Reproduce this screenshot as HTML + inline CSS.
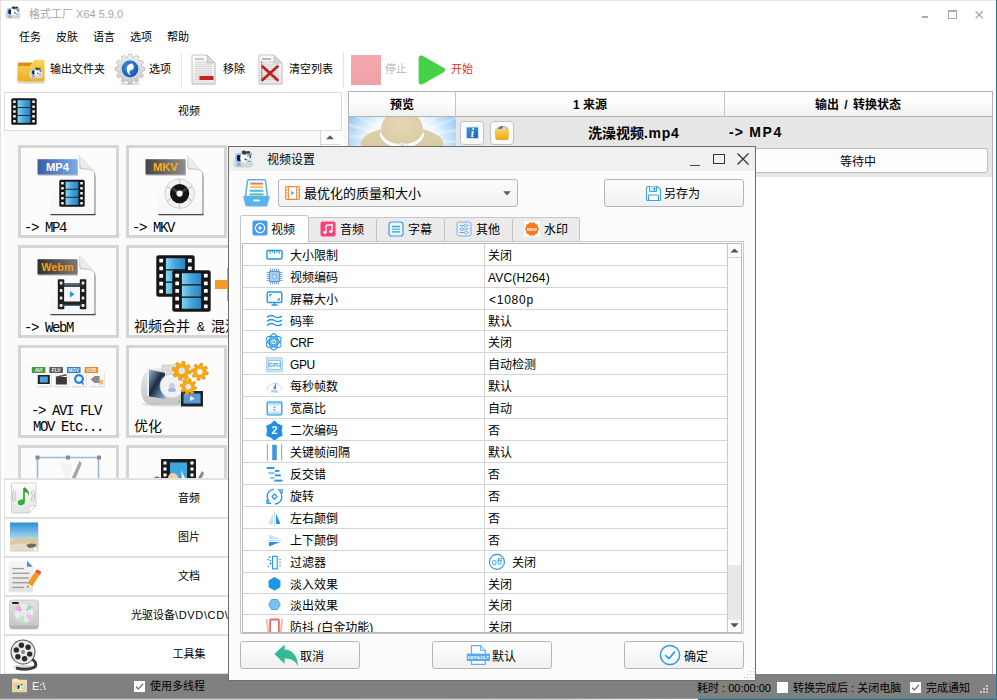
<!DOCTYPE html>
<html lang="zh-CN">
<head>
<meta charset="utf-8">
<title>格式工厂 X64 5.9.0</title>
<style>
html,body{margin:0;padding:0}
body{width:997px;height:700px;overflow:hidden;background:#fff;font-family:"Liberation Sans","Noto Sans CJK SC",sans-serif;position:relative}
div,svg{position:absolute}
svg{overflow:visible}
#win{left:0;top:0;width:997px;height:700px;overflow:hidden}
#dlg{left:228px;top:146px;width:526px;height:533px;border:1px solid #6d6d6d;background:#fcfcfc;overflow:hidden}
#grid{left:14px;top:97px;width:484px;height:388px;overflow:hidden;background:#fff}
.t{white-space:nowrap}
.c{text-align:center}
.tile{width:101px;height:93px;box-sizing:border-box;border:3px solid #d5d5d5;background:#fcfcfc;overflow:hidden}
.tl{font-family:"Liberation Mono","Noto Serif CJK SC",monospace;font-size:14px;line-height:16px;white-space:pre;color:#000;letter-spacing:-1.4px}
.tc{font-family:"Liberation Sans","Noto Sans CJK SC",sans-serif;font-weight:400;font-size:14px;line-height:20px;white-space:pre;color:#000}
.amp{font-family:"Liberation Mono",monospace;font-size:13px;letter-spacing:-0.8px}
</style>
</head>
<body>
<div id="win">
<svg style="left:4px;top:5px;" width="17" height="15" viewBox="0 0 23 20"><defs><linearGradient id="g1" x1="0" y1="0" x2="0" y2="1"><stop offset="0" stop-color="#f6f6f6"/><stop offset="1" stop-color="#d0d0d0"/></linearGradient></defs><path d="M2 11Q2 5 6 3.6L15 2.4Q20.5 3 21.6 8L22.4 14Q22.6 18 18.5 18.6H6Q2.4 18.4 2 14.5Z" fill="url(#g1)"/><path d="M4.6 4.4L10.4 3.4L10 14.2L4.4 13.2Q3.6 9 4.6 4.4Z" fill="#9cc6ee"/><path d="M6.2 6.2Q9 5.4 10 7.2V11.6Q8.6 12.6 6.4 11.8Q5.2 9 6.2 6.2Z" fill="#0c1a4c"/><path d="M6.6 13L8.8 13.4V16.2L6.4 15.6Z" fill="#7fb0e6"/><circle cx="13.2" cy="9.2" r="4" fill="#ffffff"/><path d="M10.8 2.2Q13 0.8 15.2 2.4Q17.4 1.2 19.4 2.8Q19.8 4.4 18.2 4.8Q15.6 4 14.6 5.6Q12.4 5.8 10.8 4.4Z" fill="#3c3c3c"/><path d="M15.8 5.6L21 4.2L21.4 12.4L16.2 13.2Z" fill="#e8f0fa"/><path d="M16 5.5L21 4.2L21.1 6L16.1 7.2Z" fill="#6a9ad6"/><path d="M18.6 6.6H20V9H18.6Z" fill="#3a3a3a"/><path d="M13.6 9.2L16.4 10.4L15.4 11.8L13.2 10.6Z" fill="#555"/><path d="M16.4 12L20 11.4V12.6L16.4 13.2Z" fill="#5a90d4"/><rect x="5.6" y="15.2" width="4.6" height="1.5" fill="#9a9a9a"/><circle cx="19.4" cy="15.2" r="0.7" fill="#7ae060"/></svg>
<div class="t" style="left:29px;top:6px;font-size:11px;line-height:16px;color:#a6a6a6;">格式工厂 X64 5.9.0</div>
<div style="left:922px;top:16px;width:6px;height:2px;background:#ababab"></div>
<div style="left:948px;top:10px;width:9px;height:9px;border:1px solid #ababab;border-top-width:2px;box-sizing:border-box"></div>
<svg style="left:975px;top:10px;" width="9" height="9" viewBox="0 0 9 9"><path d="M0.6 1.2L7.8 8.4M7.8 1.2L0.6 8.4" stroke="#a4a4a4" stroke-width="1.25" fill="none"/></svg>
<div class="t" style="left:19px;top:29px;font-size:11px;line-height:16px;color:#000;">任务</div>
<div class="t" style="left:56px;top:29px;font-size:11px;line-height:16px;color:#000;">皮肤</div>
<div class="t" style="left:93px;top:29px;font-size:11px;line-height:16px;color:#000;">语言</div>
<div class="t" style="left:130px;top:29px;font-size:11px;line-height:16px;color:#000;">选项</div>
<div class="t" style="left:167px;top:29px;font-size:11px;line-height:16px;color:#000;">帮助</div>
<svg style="left:16px;top:58px;" width="30" height="26" viewBox="0 0 30 26"><defs><linearGradient id="g2" x1="0" y1="0" x2="0" y2="1"><stop offset="0" stop-color="#f9d35c"/><stop offset="1" stop-color="#ecae22"/></linearGradient></defs><ellipse cx="15" cy="24.4" rx="14.5" ry="1.4" fill="#000" opacity="0.16"/><path d="M1.8 6Q1.8 4.4 3.4 4.4H16V11H1.8Z" fill="#dc8a1a"/><path d="M1.4 9.4Q1.4 8 3 8H12.6Q13.6 8 14.4 7L17.6 3Q18.4 2 19.6 2H27Q28.6 2 28.6 3.6V22Q28.6 23.6 27 23.6H3Q1.4 23.6 1.4 22Z" fill="url(#g2)"/><g transform="translate(12.4,8.6) scale(0.64)"><defs><linearGradient id="g3" x1="0" y1="0" x2="0" y2="1"><stop offset="0" stop-color="#f6f6f6"/><stop offset="1" stop-color="#d0d0d0"/></linearGradient></defs><path d="M2 11Q2 5 6 3.6L15 2.4Q20.5 3 21.6 8L22.4 14Q22.6 18 18.5 18.6H6Q2.4 18.4 2 14.5Z" fill="url(#g3)"/><path d="M4.6 4.4L10.4 3.4L10 14.2L4.4 13.2Q3.6 9 4.6 4.4Z" fill="#9cc6ee"/><path d="M6.2 6.2Q9 5.4 10 7.2V11.6Q8.6 12.6 6.4 11.8Q5.2 9 6.2 6.2Z" fill="#0c1a4c"/><path d="M6.6 13L8.8 13.4V16.2L6.4 15.6Z" fill="#7fb0e6"/><circle cx="13.2" cy="9.2" r="4" fill="#ffffff"/><path d="M10.8 2.2Q13 0.8 15.2 2.4Q17.4 1.2 19.4 2.8Q19.8 4.4 18.2 4.8Q15.6 4 14.6 5.6Q12.4 5.8 10.8 4.4Z" fill="#3c3c3c"/><path d="M15.8 5.6L21 4.2L21.4 12.4L16.2 13.2Z" fill="#e8f0fa"/><path d="M16 5.5L21 4.2L21.1 6L16.1 7.2Z" fill="#6a9ad6"/><path d="M18.6 6.6H20V9H18.6Z" fill="#3a3a3a"/><path d="M13.6 9.2L16.4 10.4L15.4 11.8L13.2 10.6Z" fill="#555"/><path d="M16.4 12L20 11.4V12.6L16.4 13.2Z" fill="#5a90d4"/><rect x="5.6" y="15.2" width="4.6" height="1.5" fill="#9a9a9a"/><circle cx="19.4" cy="15.2" r="0.7" fill="#7ae060"/></g></svg>
<div class="t" style="left:50px;top:60.5px;font-size:11px;line-height:16px;color:#000;">输出文件夹</div>
<svg style="left:114px;top:53px;" width="32" height="32" viewBox="0 0 32 32"><defs><linearGradient id="g4" x1="0" y1="0" x2="0" y2="1"><stop offset="0" stop-color="#f4f4f4"/><stop offset="1" stop-color="#c9c9c9"/></linearGradient><radialGradient id="g5" cx="0.4" cy="0.35" r="0.75"><stop offset="0" stop-color="#3f8fe0"/><stop offset="1" stop-color="#0d4ea6"/></radialGradient></defs><ellipse cx="16" cy="31" rx="11" ry="1" fill="#000" opacity="0.15"/><polygon points="28.14,14.04 30.71,14.38 30.71,17.62 28.14,17.96 27.50,20.37 29.55,21.95 27.93,24.76 25.54,23.77 23.77,25.54 24.76,27.93 21.95,29.55 20.37,27.50 17.96,28.14 17.62,30.71 14.38,30.71 14.04,28.14 11.63,27.50 10.05,29.55 7.24,27.93 8.23,25.54 6.46,23.77 4.07,24.76 2.45,21.95 4.50,20.37 3.86,17.96 1.29,17.62 1.29,14.38 3.86,14.04 4.50,11.63 2.45,10.05 4.07,7.24 6.46,8.23 8.23,6.46 7.24,4.07 10.05,2.45 11.63,4.50 14.04,3.86 14.38,1.29 17.62,1.29 17.96,3.86 20.37,4.50 21.95,2.45 24.76,4.07 23.77,6.46 25.54,8.23 27.93,7.24 29.55,10.05 27.50,11.63" fill="url(#g4)" stroke="#b3b3b3" stroke-width="0.8" stroke-linejoin="round"/><circle cx="16" cy="16" r="9.6" fill="#ececec" stroke="#c4c4c4" stroke-width="0.6"/><circle cx="16" cy="16" r="8.4" fill="url(#g5)"/><path d="M18.5 10.5C14 10.5 11 14.5 13.5 19.5C14.5 21.5 16 22.5 17 22.5C15 20.5 14.8 17.5 17.5 17C20.5 16.5 20 12.5 18.5 10.5Z" fill="#fff"/></svg>
<div class="t" style="left:149px;top:60.5px;font-size:11px;line-height:16px;color:#000;">选项</div>
<div style="left:181px;top:52px;width:1px;height:36px;background:#e2e2e2"></div>
<svg style="left:190px;top:53px;" width="27" height="33" viewBox="0 0 27 33"><defs><linearGradient id="g6" x1="0" y1="0" x2="0" y2="1"><stop offset="0" stop-color="#fdfdfd"/><stop offset="1" stop-color="#e6e6e6"/></linearGradient></defs><path d="M2 2H17L25 10V31H2Z" fill="#000" opacity="0.12" transform="translate(0.6,0.8)"/><path d="M2 2H17L25 10V31H2Z" fill="url(#g6)" stroke="#b9b9b9" stroke-width="0.8"/><path d="M17 2V10H25Z" fill="#d9d9d9" stroke="#b0b0b0" stroke-width="0.6"/><path d="M5 6H14" stroke="#6aa0d8" stroke-width="1"/><path d="M5 9.0H17" stroke="#c9c9c9" stroke-width="0.8"/><path d="M5 11.2H22" stroke="#c9c9c9" stroke-width="0.8"/><path d="M5 13.4H22" stroke="#c9c9c9" stroke-width="0.8"/><path d="M5 15.6H22" stroke="#c9c9c9" stroke-width="0.8"/><path d="M5 17.8H22" stroke="#c9c9c9" stroke-width="0.8"/><path d="M5 20.0H22" stroke="#c9c9c9" stroke-width="0.8"/><path d="M5 22.2H22" stroke="#c9c9c9" stroke-width="0.8"/><path d="M5 24.4H22" stroke="#c9c9c9" stroke-width="0.8"/><path d="M5 26.6H22" stroke="#c9c9c9" stroke-width="0.8"/><rect x="9.5" y="23" width="14" height="4" fill="#c9201d"/></svg>
<div class="t" style="left:223px;top:60.5px;font-size:11px;line-height:16px;color:#000;">移除</div>
<svg style="left:257px;top:53px;" width="27" height="33" viewBox="0 0 27 33"><defs><linearGradient id="g7" x1="0" y1="0" x2="0" y2="1"><stop offset="0" stop-color="#fdfdfd"/><stop offset="1" stop-color="#e6e6e6"/></linearGradient></defs><path d="M2 2H17L25 10V31H2Z" fill="#000" opacity="0.12" transform="translate(0.6,0.8)"/><path d="M2 2H17L25 10V31H2Z" fill="url(#g7)" stroke="#b9b9b9" stroke-width="0.8"/><path d="M17 2V10H25Z" fill="#d9d9d9" stroke="#b0b0b0" stroke-width="0.6"/><path d="M5 6H14" stroke="#777" stroke-width="1"/><path d="M5 9.0H17" stroke="#c4c4c4" stroke-width="0.8"/><rect x="4" y="8.4" width="1.2" height="1.2" fill="#555"/><path d="M5 11.2H22" stroke="#c4c4c4" stroke-width="0.8"/><rect x="4" y="10.6" width="1.2" height="1.2" fill="#555"/><path d="M5 13.4H22" stroke="#c4c4c4" stroke-width="0.8"/><rect x="4" y="12.8" width="1.2" height="1.2" fill="#555"/><path d="M5 15.6H22" stroke="#c4c4c4" stroke-width="0.8"/><rect x="4" y="15.0" width="1.2" height="1.2" fill="#555"/><path d="M5 17.8H22" stroke="#c4c4c4" stroke-width="0.8"/><rect x="4" y="17.2" width="1.2" height="1.2" fill="#555"/><path d="M5 20.0H22" stroke="#c4c4c4" stroke-width="0.8"/><rect x="4" y="19.4" width="1.2" height="1.2" fill="#555"/><path d="M5 22.2H22" stroke="#c4c4c4" stroke-width="0.8"/><rect x="4" y="21.6" width="1.2" height="1.2" fill="#555"/><path d="M5 24.4H22" stroke="#c4c4c4" stroke-width="0.8"/><rect x="4" y="23.8" width="1.2" height="1.2" fill="#555"/><path d="M5 26.6H22" stroke="#c4c4c4" stroke-width="0.8"/><rect x="4" y="26.0" width="1.2" height="1.2" fill="#555"/><path d="M5.5 13.5L20.5 27M20.5 13.5L5.5 27" stroke="#c2201f" stroke-width="2.8" stroke-linecap="round"/></svg>
<div class="t" style="left:289px;top:60.5px;font-size:11px;line-height:16px;color:#000;">清空列表</div>
<div style="left:343px;top:52px;width:1px;height:36px;background:#e2e2e2"></div>
<div style="left:351px;top:55px;width:30px;height:30px;background:linear-gradient(#f4a9af,#efa0a6)"></div>
<div class="t" style="left:385px;top:60.5px;font-size:11px;line-height:16px;color:#b9b9b9;">停止</div>
<svg style="left:417px;top:53px;" width="30" height="34" viewBox="0 0 30 34"><path d="M4.3 5.2L25.3 17L4.3 28.8Z" fill="#45d145" stroke="#45d145" stroke-width="5.4" stroke-linejoin="round"/></svg>
<div class="t" style="left:451px;top:60.5px;font-size:11px;line-height:16px;color:#e0301e;">开始</div>
<div style="left:4px;top:131px;width:317px;height:347px;background:#fafafa"></div>
<div style="left:4px;top:92px;width:338px;height:39px;background:#fff;border:1px solid #dcdcdc;box-sizing:border-box"></div>
<svg style="left:11px;top:98px;" width="26" height="27" viewBox="0 0 26 27"><defs><linearGradient id="g8" x1="0" y1="0" x2="1" y2="0"><stop offset="0" stop-color="#86d4f4"/><stop offset="0.5" stop-color="#44a4da"/><stop offset="1" stop-color="#2a84c4"/></linearGradient></defs><rect x="0.3" y="0.3" width="25.4" height="26.4" rx="1.50" fill="#161616"/><rect x="6.60" y="2.15" width="12.80" height="6.97" fill="url(#g8)"/><rect x="6.60" y="10.02" width="12.80" height="6.97" fill="url(#g8)"/><rect x="6.60" y="17.88" width="12.80" height="6.97" fill="url(#g8)"/><rect x="2.20" y="2.50" width="2.50" height="2.50" rx="0.40" fill="#fff"/><rect x="21.30" y="2.50" width="2.50" height="2.50" rx="0.40" fill="#fff"/><rect x="2.20" y="7.38" width="2.50" height="2.50" rx="0.40" fill="#fff"/><rect x="21.30" y="7.38" width="2.50" height="2.50" rx="0.40" fill="#fff"/><rect x="2.20" y="12.25" width="2.50" height="2.50" rx="0.40" fill="#fff"/><rect x="21.30" y="12.25" width="2.50" height="2.50" rx="0.40" fill="#fff"/><rect x="2.20" y="17.12" width="2.50" height="2.50" rx="0.40" fill="#fff"/><rect x="21.30" y="17.12" width="2.50" height="2.50" rx="0.40" fill="#fff"/><rect x="2.20" y="22.00" width="2.50" height="2.50" rx="0.40" fill="#fff"/><rect x="21.30" y="22.00" width="2.50" height="2.50" rx="0.40" fill="#fff"/></svg>
<div class="t c" style="left:89px;top:103px;width:200px;font-size:11px;line-height:16px;color:#000;">视频</div>
<div style="left:320px;top:131px;width:22px;height:347px;background:#fff;border-left:1px solid #d4d4d4;box-sizing:border-box"></div>
<div style="left:321px;top:144px;width:20px;height:1px;background:#d9d9d9"></div>
<svg style="left:326px;top:135px;" width="8" height="4" viewBox="0 0 8 4"><path d="M0 4.2L4 0.2L8 4.2Z" fill="#5c5c5c"/></svg>
<div class="tile" style="left:18px;top:145px;width:101px">
<svg style="left:14px;top:4px" width="66" height="66" viewBox="0 0 66 66"><defs><linearGradient id="g9" x1="0" y1="0" x2="1" y2="0"><stop offset="0" stop-color="#3c5ca6"/><stop offset="1" stop-color="#7aaae6"/></linearGradient><linearGradient id="g10" x1="0" y1="0" x2="0" y2="1"><stop offset="0" stop-color="#ffffff"/><stop offset="1" stop-color="#f6f6f6"/></linearGradient></defs><path d="M14.5 2.5H42Q44 2.5 45.5 4L57.5 17.5Q59.5 20 59.5 23V62H14.5Z" fill="#000" opacity="0.16" transform="translate(1.4,2)"/><path d="M14.5 2.5H42Q44 2.5 45.5 4L57.5 17.5Q59.5 20 59.5 23V62H14.5Z" fill="#000" opacity="0.45" transform="translate(0.8,1.1)"/><rect x="15.5" y="61" width="44.8" height="2.1" fill="#000" opacity="0.4"/><path d="M14.5 2.5H42Q44 2.5 45.5 4L57.5 17.5Q59.5 20 59.5 23V62H14.5Z" fill="url(#g10)"/><path d="M43.5 3L58.5 19.5Q54 17 47 17.5Q44 17.5 44.3 14Q44.8 8 43.5 3Z" fill="#c9c9c9"/><path d="M43.5 3L57 18Q53 16 47.5 16.3Q45.3 16.3 45.5 13.5Q45.8 8 43.5 3Z" fill="#ececec"/><rect x="3.3" y="8.6" width="39.6" height="15" fill="#000" opacity="0.28"/><rect x="2.5" y="7.2" width="39.8" height="15.2" fill="url(#g9)"/><text x="22.4" y="19.2" font-family="Liberation Sans,sans-serif" font-weight="bold" font-size="11.2" fill="#fff" text-anchor="middle">MP4</text><g transform="translate(24,27.5)"><defs><linearGradient id="g11" x1="0" y1="0" x2="1" y2="0"><stop offset="0" stop-color="#86d4f4"/><stop offset="0.5" stop-color="#44a4da"/><stop offset="1" stop-color="#2a84c4"/></linearGradient></defs><rect x="0.3" y="0.3" width="25.4" height="26.9" rx="1.50" fill="#161616"/><rect x="6.60" y="2.15" width="12.80" height="7.13" fill="url(#g11)"/><rect x="6.60" y="10.18" width="12.80" height="7.13" fill="url(#g11)"/><rect x="6.60" y="18.22" width="12.80" height="7.13" fill="url(#g11)"/><rect x="2.20" y="2.50" width="2.50" height="2.50" rx="0.40" fill="#fff"/><rect x="21.30" y="2.50" width="2.50" height="2.50" rx="0.40" fill="#fff"/><rect x="2.20" y="7.50" width="2.50" height="2.50" rx="0.40" fill="#fff"/><rect x="21.30" y="7.50" width="2.50" height="2.50" rx="0.40" fill="#fff"/><rect x="2.20" y="12.50" width="2.50" height="2.50" rx="0.40" fill="#fff"/><rect x="21.30" y="12.50" width="2.50" height="2.50" rx="0.40" fill="#fff"/><rect x="2.20" y="17.50" width="2.50" height="2.50" rx="0.40" fill="#fff"/><rect x="21.30" y="17.50" width="2.50" height="2.50" rx="0.40" fill="#fff"/><rect x="2.20" y="22.50" width="2.50" height="2.50" rx="0.40" fill="#fff"/><rect x="21.30" y="22.50" width="2.50" height="2.50" rx="0.40" fill="#fff"/></g></svg>
<div class="tl" style="left:3px;top:71.5px;">-&gt; MP4</div>
</div>
<div class="tile" style="left:126px;top:145px;width:101px">
<svg style="left:14px;top:4px" width="66" height="66" viewBox="0 0 66 66"><defs><linearGradient id="g12" x1="0" y1="0" x2="1" y2="0"><stop offset="0" stop-color="#454545"/><stop offset="1" stop-color="#8e8e8e"/></linearGradient><linearGradient id="g13" x1="0" y1="0" x2="0" y2="1"><stop offset="0" stop-color="#ffffff"/><stop offset="1" stop-color="#f6f6f6"/></linearGradient></defs><path d="M14.5 2.5H42Q44 2.5 45.5 4L57.5 17.5Q59.5 20 59.5 23V62H14.5Z" fill="#000" opacity="0.16" transform="translate(1.4,2)"/><path d="M14.5 2.5H42Q44 2.5 45.5 4L57.5 17.5Q59.5 20 59.5 23V62H14.5Z" fill="#000" opacity="0.45" transform="translate(0.8,1.1)"/><rect x="15.5" y="61" width="44.8" height="2.1" fill="#000" opacity="0.4"/><path d="M14.5 2.5H42Q44 2.5 45.5 4L57.5 17.5Q59.5 20 59.5 23V62H14.5Z" fill="url(#g13)"/><path d="M43.5 3L58.5 19.5Q54 17 47 17.5Q44 17.5 44.3 14Q44.8 8 43.5 3Z" fill="#c9c9c9"/><path d="M43.5 3L57 18Q53 16 47.5 16.3Q45.3 16.3 45.5 13.5Q45.8 8 43.5 3Z" fill="#ececec"/><rect x="3.3" y="8.6" width="39.6" height="15" fill="#000" opacity="0.28"/><rect x="2.5" y="7.2" width="39.8" height="15.2" fill="url(#g12)"/><text x="22.4" y="19.2" font-family="Liberation Sans,sans-serif" font-weight="bold" font-size="11.2" fill="#ffad10" text-anchor="middle">MKV</text><circle cx="36.6" cy="41.6" r="14.8" fill="#f3f3f3" stroke="#d2d2d2" stroke-width="1"/><path d="M36.6 50.6L36.6 55.9" stroke="#cfcfcf" stroke-width="1.6"/><path d="M28.8 46.1L24.2 48.8" stroke="#cfcfcf" stroke-width="1.6"/><path d="M28.8 37.1L24.2 34.5" stroke="#cfcfcf" stroke-width="1.6"/><path d="M36.6 32.6L36.6 27.3" stroke="#cfcfcf" stroke-width="1.6"/><path d="M44.4 37.1L49.0 34.4" stroke="#cfcfcf" stroke-width="1.6"/><path d="M44.4 46.1L49.0 48.7" stroke="#cfcfcf" stroke-width="1.6"/><circle cx="36.6" cy="41.6" r="9.6" fill="#141414"/><path d="M29.6 36.6L36.6 41.6L43.6 36.6" stroke="#555" stroke-width="2.5" fill="none" opacity="0.7"/><circle cx="36.6" cy="41.6" r="3.1" fill="#fff"/></svg>
<div class="tl" style="left:3px;top:71.5px;">-&gt; MKV</div>
</div>
<div class="tile" style="left:18px;top:245px;width:101px">
<svg style="left:14px;top:4px" width="66" height="66" viewBox="0 0 66 66"><defs><linearGradient id="g14" x1="0" y1="0" x2="1" y2="0"><stop offset="0" stop-color="#303030"/><stop offset="1" stop-color="#7a7a7a"/></linearGradient><linearGradient id="g15" x1="0" y1="0" x2="0" y2="1"><stop offset="0" stop-color="#ffffff"/><stop offset="1" stop-color="#f6f6f6"/></linearGradient></defs><path d="M14.5 2.5H42Q44 2.5 45.5 4L57.5 17.5Q59.5 20 59.5 23V62H14.5Z" fill="#000" opacity="0.16" transform="translate(1.4,2)"/><path d="M14.5 2.5H42Q44 2.5 45.5 4L57.5 17.5Q59.5 20 59.5 23V62H14.5Z" fill="#000" opacity="0.45" transform="translate(0.8,1.1)"/><rect x="15.5" y="61" width="44.8" height="2.1" fill="#000" opacity="0.4"/><path d="M14.5 2.5H42Q44 2.5 45.5 4L57.5 17.5Q59.5 20 59.5 23V62H14.5Z" fill="url(#g15)"/><path d="M43.5 3L58.5 19.5Q54 17 47 17.5Q44 17.5 44.3 14Q44.8 8 43.5 3Z" fill="#c9c9c9"/><path d="M43.5 3L57 18Q53 16 47.5 16.3Q45.3 16.3 45.5 13.5Q45.8 8 43.5 3Z" fill="#ececec"/><rect x="3.3" y="8.6" width="39.6" height="15" fill="#000" opacity="0.28"/><rect x="2.5" y="7.2" width="39.8" height="15.2" fill="url(#g14)"/><text x="22.4" y="19.2" font-family="Liberation Sans,sans-serif" font-weight="bold" font-size="10.8" fill="#ff9a12" text-anchor="middle">Webm</text><g transform="translate(22.8,27.3)"><rect x="0" y="0" width="6.5" height="30" rx="0.8" fill="#1d1d1d"/><rect x="22.0" y="0" width="6.5" height="30" rx="0.8" fill="#1d1d1d"/><rect x="3" y="4" width="22.5" height="3.6" fill="#2a2a2a"/><rect x="3" y="22" width="22.5" height="4.4" fill="#222"/><rect x="6.5" y="7.6" width="15.5" height="14.4" fill="#f4f6f8"/><rect x="6.5" y="5" width="15.5" height="1" fill="#6a8aa8"/><rect x="1" y="25.5" width="26.5" height="1" fill="#4a6a88"/><rect x="2" y="2.2" width="2.6" height="3" rx="0.5" fill="#e8e8e8"/><rect x="23.9" y="2.2" width="2.6" height="3" rx="0.5" fill="#e8e8e8"/><rect x="2" y="9.7" width="2.6" height="3" rx="0.5" fill="#e8e8e8"/><rect x="23.9" y="9.7" width="2.6" height="3" rx="0.5" fill="#e8e8e8"/><rect x="2" y="17.2" width="2.6" height="3" rx="0.5" fill="#e8e8e8"/><rect x="23.9" y="17.2" width="2.6" height="3" rx="0.5" fill="#e8e8e8"/><rect x="2" y="24.7" width="2.6" height="3" rx="0.5" fill="#e8e8e8"/><rect x="23.9" y="24.7" width="2.6" height="3" rx="0.5" fill="#e8e8e8"/><path d="M12.05 11.8L16.85 15.0L12.05 18.2Z" fill="#2a96e0"/></g></svg>
<div class="tl" style="left:3px;top:71.5px;">-&gt; WebM</div>
</div>
<div class="tile" style="left:126px;top:245px;width:160px">
<svg style="left:24px;top:4px" width="120" height="64" viewBox="0 0 120 64"><g transform="translate(3,3)"><defs><linearGradient id="g16" x1="0" y1="0" x2="1" y2="0"><stop offset="0" stop-color="#86d4f4"/><stop offset="0.5" stop-color="#44a4da"/><stop offset="1" stop-color="#2a84c4"/></linearGradient></defs><rect x="0.3" y="0.3" width="38.4" height="41.4" rx="2.25" fill="#161616"/><rect x="9.90" y="3.22" width="19.20" height="10.95" fill="url(#g16)"/><rect x="9.90" y="15.52" width="19.20" height="10.95" fill="url(#g16)"/><rect x="9.90" y="27.82" width="19.20" height="10.95" fill="url(#g16)"/><rect x="3.30" y="3.75" width="3.75" height="3.75" rx="0.60" fill="#fff"/><rect x="31.95" y="3.75" width="3.75" height="3.75" rx="0.60" fill="#fff"/><rect x="3.30" y="11.44" width="3.75" height="3.75" rx="0.60" fill="#fff"/><rect x="31.95" y="11.44" width="3.75" height="3.75" rx="0.60" fill="#fff"/><rect x="3.30" y="19.12" width="3.75" height="3.75" rx="0.60" fill="#fff"/><rect x="31.95" y="19.12" width="3.75" height="3.75" rx="0.60" fill="#fff"/><rect x="3.30" y="26.81" width="3.75" height="3.75" rx="0.60" fill="#fff"/><rect x="31.95" y="26.81" width="3.75" height="3.75" rx="0.60" fill="#fff"/><rect x="3.30" y="34.50" width="3.75" height="3.75" rx="0.60" fill="#fff"/><rect x="31.95" y="34.50" width="3.75" height="3.75" rx="0.60" fill="#fff"/></g><g transform="translate(19,18)"><defs><linearGradient id="g17" x1="0" y1="0" x2="1" y2="0"><stop offset="0" stop-color="#86d4f4"/><stop offset="0.5" stop-color="#44a4da"/><stop offset="1" stop-color="#2a84c4"/></linearGradient></defs><rect x="0.3" y="0.3" width="38.4" height="41.4" rx="2.25" fill="#161616"/><rect x="9.90" y="3.22" width="19.20" height="10.95" fill="url(#g17)"/><rect x="9.90" y="15.52" width="19.20" height="10.95" fill="url(#g17)"/><rect x="9.90" y="27.82" width="19.20" height="10.95" fill="url(#g17)"/><rect x="3.30" y="3.75" width="3.75" height="3.75" rx="0.60" fill="#fff"/><rect x="31.95" y="3.75" width="3.75" height="3.75" rx="0.60" fill="#fff"/><rect x="3.30" y="11.44" width="3.75" height="3.75" rx="0.60" fill="#fff"/><rect x="31.95" y="11.44" width="3.75" height="3.75" rx="0.60" fill="#fff"/><rect x="3.30" y="19.12" width="3.75" height="3.75" rx="0.60" fill="#fff"/><rect x="31.95" y="19.12" width="3.75" height="3.75" rx="0.60" fill="#fff"/><rect x="3.30" y="26.81" width="3.75" height="3.75" rx="0.60" fill="#fff"/><rect x="31.95" y="26.81" width="3.75" height="3.75" rx="0.60" fill="#fff"/><rect x="3.30" y="34.50" width="3.75" height="3.75" rx="0.60" fill="#fff"/><rect x="31.95" y="34.50" width="3.75" height="3.75" rx="0.60" fill="#fff"/></g><path d="M62 28H74V16H83V28H95V37H83V49H74V37H62Z" fill="#f39a2b"/></svg>
<div class="tc" style="left:5px;top:68px;">视频合并<span class="amp"> &amp; </span>混流</div>
</div>
<div class="tile" style="left:18px;top:345px;width:101px">
<svg style="left:9px;top:17px" width="80" height="24" viewBox="0 0 80 24"><path d="M6.3 4H17.8L21.3 7.5V21.5H6.3Z" fill="#000" opacity="0.2" transform="translate(0.5,0.7)"/><path d="M6.3 4H17.8L21.3 7.5V21.5H6.3Z" fill="#f8f8f8"/><rect x="1.8" y="2" width="13.5" height="6" fill="#3f9a4a"/><text x="8.6" y="6.8" font-family="Liberation Sans,sans-serif" font-weight="bold" font-size="4.8" fill="#f4f4f4" text-anchor="middle">AVI</text><rect x="7.8" y="10" width="12" height="9" fill="#222"/><rect x="9.8" y="11.5" width="8" height="6" fill="#4aa0e0"/><path d="M23.900000000000002 4H35.400000000000006L38.900000000000006 7.5V21.5H23.900000000000002Z" fill="#000" opacity="0.2" transform="translate(0.5,0.7)"/><path d="M23.900000000000002 4H35.400000000000006L38.900000000000006 7.5V21.5H23.900000000000002Z" fill="#f8f8f8"/><rect x="19.400000000000002" y="2" width="13.5" height="6" fill="#5a5a5a"/><text x="26.200000000000003" y="6.8" font-family="Liberation Sans,sans-serif" font-weight="bold" font-size="4.8" fill="#f4f4f4" text-anchor="middle">FLV</text><rect x="25.900000000000002" y="12" width="11" height="7.5" fill="#3a3a3a"/><path d="M25.900000000000002 11.5L36.400000000000006 9L36.900000000000006 10.5L25.900000000000002 13Z" fill="#555"/><path d="M41.5 4H53.0L56.5 7.5V21.5H41.5Z" fill="#000" opacity="0.2" transform="translate(0.5,0.7)"/><path d="M41.5 4H53.0L56.5 7.5V21.5H41.5Z" fill="#f8f8f8"/><rect x="37.0" y="2" width="13.5" height="6" fill="#2f7fc0"/><text x="43.8" y="6.8" font-family="Liberation Sans,sans-serif" font-weight="bold" font-size="4.8" fill="#f4f4f4" text-anchor="middle">MOV</text><circle cx="49.0" cy="14" r="5" fill="#2a7fd8"/><circle cx="49.0" cy="14" r="2.8" fill="#e8f2fc"/><path d="M50.5 16L53.5 19.5" stroke="#2a7fd8" stroke-width="1.6"/><path d="M59.1 4H70.6L74.1 7.5V21.5H59.1Z" fill="#000" opacity="0.2" transform="translate(0.5,0.7)"/><path d="M59.1 4H70.6L74.1 7.5V21.5H59.1Z" fill="#f8f8f8"/><rect x="54.6" y="2" width="13.5" height="6" fill="#e8892a"/><text x="61.4" y="6.8" font-family="Liberation Sans,sans-serif" font-weight="bold" font-size="4.8" fill="#f4f4f4" text-anchor="middle">VOB</text><path d="M60.6 14.5L64.6 11H69.6V18H64.6Z" fill="#8a8a8a"/><rect x="69.1" y="15" width="4" height="4.5" fill="#e8c060"/></svg>
<div class="tl" style="left:10px;top:54.6px;">-&gt; AVI FLV</div>
<div class="tl" style="left:12px;top:70.6px;">MOV Etc...</div>
</div>
<div class="tile" style="left:126px;top:345px;width:101px">
<svg style="left:10px;top:11px" width="74" height="50" viewBox="0 0 74 50"><defs><linearGradient id="g18" x1="0" y1="0" x2="0" y2="1"><stop offset="0" stop-color="#ececec"/><stop offset="1" stop-color="#c4c4c4"/></linearGradient><linearGradient id="g19" x1="0" y1="0" x2="1" y2="1"><stop offset="0" stop-color="#a8d0f0"/><stop offset="0.5" stop-color="#1a2a40"/><stop offset="1" stop-color="#8ab8e0"/></linearGradient></defs><ellipse cx="27" cy="45" rx="24" ry="3" fill="#000" opacity="0.10"/><path d="M2 30Q2 14 12 10L42 7Q50 10 50 26Q50 44 40 46H12Q2 44 2 30Z" fill="url(#g18)"/><path d="M23 6H36V22H23Z" fill="#dcdcdc" stroke="#c0c0c0" stroke-width="0.6"/><path d="M8 10L26 14V40L8 37Z" fill="url(#g19)"/><path d="M8 10L10 10.5V37.4L8 37Z" fill="#e8eef4"/><circle cx="33" cy="27" r="12" fill="#f2f2f2" stroke="#c8c8c8" stroke-width="0.8"/><circle cx="33" cy="27" r="3" fill="#c8d0dc"/><ellipse cx="33" cy="31" rx="4" ry="2" fill="#8ab0d8" opacity="0.8"/><rect x="42" y="32" width="22" height="15.5" fill="#20242a"/><rect x="44.5" y="34.5" width="17" height="10" fill="#5a9ad8"/><path d="M51 37L56 39.5L51 42Z" fill="#e8f0f8"/><circle cx="40" cy="42.5" r="0.9" fill="#4ad04a"/><polygon points="49.7,11.5 52.4,12.3 51.8,15.1 49.0,14.8 47.9,16.4 49.2,18.9 46.8,20.5 45.1,18.3 43.1,18.7 42.3,21.4 39.5,20.8 39.8,18.0 38.2,16.9 35.7,18.2 34.1,15.8 36.3,14.1 35.9,12.1 33.2,11.3 33.8,8.5 36.6,8.8 37.7,7.2 36.4,4.7 38.8,3.1 40.5,5.3 42.5,4.9 43.3,2.2 46.1,2.8 45.8,5.6 47.4,6.7 49.9,5.4 51.5,7.8 49.3,9.5" fill="#f7a813" stroke="#e0900a" stroke-width="0.7" stroke-linejoin="round"/><circle cx="42.8" cy="11.8" r="3.2" fill="#dde6f0"/><polygon points="67.0,12.5 69.4,13.2 68.9,15.7 66.4,15.5 65.4,17.0 66.6,19.2 64.4,20.6 62.8,18.6 61.1,19.0 60.4,21.4 57.9,20.9 58.1,18.4 56.6,17.4 54.4,18.6 53.0,16.4 55.0,14.8 54.6,13.1 52.2,12.4 52.7,9.9 55.2,10.1 56.2,8.6 55.0,6.4 57.2,5.0 58.8,7.0 60.5,6.6 61.2,4.2 63.7,4.7 63.5,7.2 65.0,8.2 67.2,7.0 68.6,9.2 66.6,10.8" fill="#f7a813" stroke="#e0900a" stroke-width="0.7" stroke-linejoin="round"/><circle cx="60.8" cy="12.8" r="2.8" fill="#fbfbfb"/><polygon points="55.2,27.5 57.5,28.2 57.0,30.6 54.6,30.4 53.7,31.8 54.8,33.9 52.8,35.2 51.2,33.4 49.6,33.7 48.9,36.0 46.5,35.5 46.7,33.1 45.3,32.2 43.2,33.3 41.9,31.3 43.7,29.7 43.4,28.1 41.1,27.4 41.6,25.0 44.0,25.2 44.9,23.8 43.8,21.7 45.8,20.4 47.4,22.2 49.0,21.9 49.7,19.6 52.1,20.1 51.9,22.5 53.3,23.4 55.4,22.3 56.7,24.3 54.9,25.9" fill="#f7a813" stroke="#e0900a" stroke-width="0.7" stroke-linejoin="round"/><circle cx="49.3" cy="27.8" r="2.7" fill="#f0f0f0"/></svg>
<div class="tc" style="left:5px;top:68px;">优化</div>
</div>
<div class="tile" style="left:18px;top:445px;width:101px">
<svg style="left:12px;top:5px" width="70" height="40" viewBox="0 0 70 40"><path d="M25 8L34 30L40 12" fill="#f3f3f3"/><path d="M36.5 30L46.5 8L48.8 10.5L40.5 30Z" fill="#a4a4a4"/><path d="M4.5 40V4.5H65.5V40" fill="none" stroke="#8fbbe2" stroke-width="1.6"/><rect x="2.5" y="2.5" width="4" height="4" fill="#8c8c8c"/><rect x="33" y="2.5" width="4" height="4" fill="#8c8c8c"/><rect x="64" y="2.5" width="4" height="4" fill="#8c8c8c"/></svg>
<div class="tl" style="left:3px;top:71.5px;"></div>
</div>
<div class="tile" style="left:126px;top:445px;width:101px">
<svg style="left:22px;top:8px" width="60" height="30" viewBox="0 0 60 30"><rect x="10" y="3" width="35" height="30" rx="1" fill="#1c1c1c"/><rect x="19" y="6.5" width="17" height="22" fill="#3fa6e0"/><rect x="12.5" y="5.5" width="3" height="3" fill="#fff"/><rect x="39.5" y="5.5" width="3" height="3" fill="#fff"/><rect x="12.5" y="11.5" width="3" height="3" fill="#fff"/><rect x="39.5" y="11.5" width="3" height="3" fill="#fff"/><rect x="12.5" y="17.5" width="3" height="3" fill="#fff"/><rect x="39.5" y="17.5" width="3" height="3" fill="#fff"/><rect x="12.5" y="23.5" width="3" height="3" fill="#fff"/><rect x="39.5" y="23.5" width="3" height="3" fill="#fff"/><circle cx="22" cy="22" r="5" fill="#f4cfa0"/><path d="M30 14L34 22L31 22Z" fill="#f4f4f4"/><circle cx="6" cy="24" r="3.5" fill="#9a5ab0"/><path d="M47 22L51 15L53 17L50 24Z" fill="#8a8a8a"/></svg>
<div class="tl" style="left:3px;top:71.5px;"></div>
</div>
<div style="left:3px;top:478px;width:340px;height:1px;background:#e4e4e4"></div>
<div style="left:4px;top:479px;width:338px;height:39px;background:#fff;border:1px solid #e0e0e0;box-sizing:border-box"></div>
<svg style="left:8px;top:482px;" width="32" height="32" viewBox="0 0 32 32"><defs><linearGradient id="g20" x1="0" y1="0" x2="0" y2="1"><stop offset="0" stop-color="#fcfcfc"/><stop offset="1" stop-color="#e4e4e4"/></linearGradient></defs><path d="M3.5 2Q3.5 1 4.5 1H28V24L21 31H4.5Q3.5 31 3.5 30Z" fill="url(#g20)" stroke="#c6c6c6" stroke-width="0.8"/><path d="M21 31V25Q21 24 22 24H28Z" fill="#fff" stroke="#c0c0c0" stroke-width="0.6"/><path d="M16 6V19" stroke="#2c9a2c" stroke-width="1.6"/><path d="M16 5C19 7 21.5 9 21 14C20 10.5 18 10 16.5 10Z" fill="#2c9a2c"/><ellipse cx="13.3" cy="20.3" rx="3.6" ry="2.8" fill="#30b030" transform="rotate(-20 13.3 20.3)"/><path d="M8 9Q5 14 8 19M6 8Q2.5 14 6 20" stroke="#b0b0b0" stroke-width="0.8" fill="none"/><path d="M23 9Q26 14 23 19M25 8Q28.5 14 25 20" stroke="#b0b0b0" stroke-width="0.8" fill="none"/></svg>
<div class="t c" style="left:39px;top:489.5px;width:300px;font-size:11px;line-height:16px;color:#000;">音频</div>
<div style="left:4px;top:518px;width:338px;height:39px;background:#fff;border:1px solid #e0e0e0;box-sizing:border-box"></div>
<svg style="left:8px;top:521px;" width="32" height="32" viewBox="0 0 32 32"><defs><linearGradient id="g21" x1="0" y1="0" x2="0" y2="1"><stop offset="0" stop-color="#2f8fd0"/><stop offset="0.55" stop-color="#9fd6f0"/><stop offset="0.6" stop-color="#e8e2c8"/></linearGradient></defs><rect x="2.5" y="2.5" width="28" height="28" fill="#000" opacity="0.2"/><rect x="2" y="1.5" width="28" height="28" fill="url(#g21)"/><path d="M2 20Q8 15 14 18Q22 14 30 18V29.5H2Z" fill="#d9c9a0"/><path d="M2 24Q12 21 30 24V29.5H2Z" fill="#e4dcc4"/><path d="M18 24Q24 21 29 24Q27 27 21 27Z" fill="#6a6a66"/><path d="M26 29.5V26L30 29.5Z" fill="#fff"/></svg>
<div class="t c" style="left:39px;top:528.5px;width:300px;font-size:11px;line-height:16px;color:#000;">图片</div>
<div style="left:4px;top:557px;width:338px;height:39px;background:#fff;border:1px solid #e0e0e0;box-sizing:border-box"></div>
<svg style="left:8px;top:560px;" width="32" height="32" viewBox="0 0 32 32"><defs><linearGradient id="g23" x1="0" y1="0" x2="0" y2="1"><stop offset="0" stop-color="#f6f6f6"/><stop offset="1" stop-color="#e2e2e2"/></linearGradient></defs><path d="M0.6 1.2H19L24.6 6.8V31.6H0.6Z" fill="#000" opacity="0.10" transform="translate(0.4,0.6)"/><path d="M0.6 1.2H19L24.6 6.8V31.6H0.6Z" fill="url(#g23)"/><path d="M19 0.8L24.8 6.8H19Z" fill="#3a9ad8"/><path d="M4.4 8.6H16" stroke="#9a9a9a" stroke-width="1.3"/><path d="M4.4 13.3H21" stroke="#9a9a9a" stroke-width="1.3"/><path d="M4.4 18.0H21" stroke="#9a9a9a" stroke-width="1.3"/><path d="M4.4 22.7H21" stroke="#9a9a9a" stroke-width="1.3"/><path d="M4.4 27.4H16" stroke="#9a9a9a" stroke-width="1.3"/><path d="M19.6 23.2L27 12L31.6 15L24.2 26.2Z" fill="#f29a1e"/><path d="M27 12L28.4 9.9Q29 9.2 29.9 9.7L32.8 11.6Q33.5 12.2 33 13L31.6 15Z" fill="#e85050"/><path d="M19.6 23.2L19.2 27.6L24.2 26.2Z" fill="#f6e2c0"/><path d="M19.2 27.6L20.9 27.1L19.4 25.6Z" fill="#333"/></svg>
<div class="t c" style="left:39px;top:567.5px;width:300px;font-size:11px;line-height:16px;color:#000;">文档</div>
<div style="left:4px;top:596px;width:338px;height:39px;background:#fff;border:1px solid #e0e0e0;box-sizing:border-box"></div>
<svg style="left:8px;top:599px;" width="32" height="32" viewBox="0 0 32 32"><defs><linearGradient id="g24" x1="0" y1="0" x2="0" y2="1"><stop offset="0" stop-color="#e2e2e2"/><stop offset="1" stop-color="#c4c4c4"/></linearGradient></defs><rect x="1.5" y="1" width="29" height="29" rx="3" fill="url(#g24)" stroke="#c2c2c2" stroke-width="0.8"/><rect x="4.2" y="3" width="6.4" height="2" rx="0.5" fill="#222"/><circle cx="16" cy="14" r="10" fill="#eeeaee" stroke="#d0d0d0" stroke-width="0.6"/><path d="M16 14L20.5 5.2A10 10 0 0 1 24.6 9Z" fill="#9ae0c0"/><path d="M16 14L7 11A10 10 0 0 1 11 5.5Z" fill="#e4b0e0"/><path d="M16 14L9 21A10 10 0 0 0 16.5 24Z" fill="#b8ecc8"/><path d="M16 14L25.5 16.5A10 10 0 0 1 21.5 22.3Z" fill="#e8c4e8"/><circle cx="16" cy="14" r="3.2" fill="#f8f8f8" stroke="#c8c8c8" stroke-width="0.6"/><circle cx="16" cy="14" r="1.2" fill="#d0d0d0"/><rect x="1.5" y="26.6" width="29" height="1" fill="#a8a8a8"/><rect x="2.5" y="28" width="27" height="2" rx="1" fill="#b4b4b4"/></svg>
<div class="t" style="left:131px;top:606.5px;font-size:11px;line-height:16px;color:#000;">光驱设备<span style="letter-spacing:0.65px">\DVD\CD\ISO</span></div>
<div style="left:4px;top:635px;width:338px;height:39px;background:#fff;border:1px solid #e0e0e0;box-sizing:border-box"></div>
<svg style="left:8px;top:638px;" width="32" height="32" viewBox="0 0 32 32"><ellipse cx="17" cy="29" rx="12" ry="2" fill="#000" opacity="0.15"/><path d="M22 20Q30 24 27 29Q20 33 8 30" stroke="#3a3a3a" stroke-width="3" fill="none"/><circle cx="15" cy="14" r="12.5" fill="#4a4a4a"/><circle cx="15" cy="14" r="11.5" fill="#e9e9e9"/><circle cx="21.7" cy="16.1" r="2.7" fill="#2a2a2a"/><circle cx="16.6" cy="20.8" r="2.7" fill="#2a2a2a"/><circle cx="9.9" cy="18.8" r="2.7" fill="#2a2a2a"/><circle cx="8.3" cy="11.9" r="2.7" fill="#2a2a2a"/><circle cx="13.4" cy="7.2" r="2.7" fill="#2a2a2a"/><circle cx="20.1" cy="9.2" r="2.7" fill="#2a2a2a"/><circle cx="15" cy="14" r="2" fill="#888"/></svg>
<div class="t c" style="left:39px;top:645.5px;width:300px;font-size:11px;line-height:16px;color:#000;">工具集</div>
<div style="left:344px;top:91px;width:4px;height:583px;background:#f8f8f8"></div>
<div style="left:348px;top:91px;width:645px;height:583px;background:#fff;border:1px solid #b4b4b4;border-bottom:none;box-sizing:border-box"></div>
<div style="left:349px;top:92px;width:643px;height:24px;background:linear-gradient(#fff,#fdfdfd 45%,#f1f1f1)"></div>
<div style="left:349px;top:116px;width:643px;height:1px;background:#b4b4b4"></div>
<div style="left:455px;top:92px;width:1px;height:25px;background:#c4c4c4"></div>
<div style="left:724px;top:92px;width:1px;height:25px;background:#c4c4c4"></div>
<div class="t c" style="left:302px;top:97px;width:200px;font-size:12px;line-height:16px;color:#000;font-weight:bold">预览</div>
<div class="t c" style="left:490px;top:97px;width:200px;font-size:12px;line-height:16px;color:#000;font-weight:bold">1 来源</div>
<div class="t c" style="left:758px;top:97px;width:200px;font-size:12px;line-height:16px;color:#000;font-weight:bold;word-spacing:2px">输出 / 转换状态</div>
<div style="left:349px;top:117px;width:643px;height:60px;background:#e6e6e6"></div>
<svg style="left:349px;top:117px;overflow:hidden" width="107" height="80" viewBox="0 0 107 80"><defs><radialGradient id="g25" cx="0.5" cy="0.3" r="0.8"><stop offset="0" stop-color="#ffffff"/><stop offset="0.4" stop-color="#f0f8fe"/><stop offset="0.62" stop-color="#b0d8f8"/><stop offset="0.85" stop-color="#62aeee"/><stop offset="1" stop-color="#4a9ee8"/></radialGradient><linearGradient id="g26" x1="0" y1="0" x2="0" y2="1"><stop offset="0" stop-color="#ddd0aa"/><stop offset="1" stop-color="#d4c49c"/></linearGradient><radialGradient id="g27" cx="0.5" cy="0.4" r="0.7"><stop offset="0" stop-color="#e4d8b4"/><stop offset="1" stop-color="#d8c9a2"/></radialGradient></defs><rect x="0" y="0" width="107" height="80" fill="url(#g25)"/><path d="M53 22L172.9 28.0" stroke="#fff" stroke-width="3" opacity="0.3"/><path d="M53 22L169.0 52.8" stroke="#fff" stroke-width="3" opacity="0.3"/><path d="M53 22L160.0 76.2" stroke="#fff" stroke-width="3" opacity="0.3"/><path d="M53 22L146.4 97.3" stroke="#fff" stroke-width="3" opacity="0.3"/><path d="M53 22L128.7 115.1" stroke="#fff" stroke-width="3" opacity="0.3"/><path d="M53 22L107.7 128.8" stroke="#fff" stroke-width="3" opacity="0.3"/><path d="M53 22L84.3 137.8" stroke="#fff" stroke-width="3" opacity="0.3"/><path d="M53 22L59.6 141.8" stroke="#fff" stroke-width="3" opacity="0.3"/><path d="M53 22L34.5 140.6" stroke="#fff" stroke-width="3" opacity="0.3"/><path d="M53 22L10.3 134.1" stroke="#fff" stroke-width="3" opacity="0.3"/><path d="M53 22L-12.1 122.8" stroke="#fff" stroke-width="3" opacity="0.3"/><path d="M53 22L-31.7 107.1" stroke="#fff" stroke-width="3" opacity="0.3"/><path d="M53 22L-47.5 87.6" stroke="#fff" stroke-width="3" opacity="0.3"/><path d="M53 22L-58.9 65.3" stroke="#fff" stroke-width="3" opacity="0.3"/><path d="M53 22L-65.5 41.1" stroke="#fff" stroke-width="3" opacity="0.3"/><path d="M53 22L-66.9 16.0" stroke="#fff" stroke-width="3" opacity="0.3"/><path d="M53 22L-63.0 -8.8" stroke="#fff" stroke-width="3" opacity="0.3"/><path d="M53 22L-54.0 -32.2" stroke="#fff" stroke-width="3" opacity="0.3"/><path d="M53 22L-40.4 -53.3" stroke="#fff" stroke-width="3" opacity="0.3"/><path d="M53 22L-22.7 -71.1" stroke="#fff" stroke-width="3" opacity="0.3"/><path d="M53 22L-1.7 -84.8" stroke="#fff" stroke-width="3" opacity="0.3"/><path d="M53 22L21.7 -93.8" stroke="#fff" stroke-width="3" opacity="0.3"/><path d="M53 22L46.4 -97.8" stroke="#fff" stroke-width="3" opacity="0.3"/><path d="M53 22L71.5 -96.6" stroke="#fff" stroke-width="3" opacity="0.3"/><path d="M53 22L95.7 -90.1" stroke="#fff" stroke-width="3" opacity="0.3"/><path d="M53 22L118.1 -78.8" stroke="#fff" stroke-width="3" opacity="0.3"/><path d="M53 22L137.7 -63.1" stroke="#fff" stroke-width="3" opacity="0.3"/><path d="M53 22L153.5 -43.6" stroke="#fff" stroke-width="3" opacity="0.3"/><path d="M53 22L164.9 -21.3" stroke="#fff" stroke-width="3" opacity="0.3"/><path d="M53 22L171.5 2.9" stroke="#fff" stroke-width="3" opacity="0.3"/><ellipse cx="53" cy="27" rx="41.5" ry="17" fill="url(#g26)"/><path d="M31.5 17C31.5 2 40 -7 53 -7C66 -7 74.5 2 74.5 17C74.5 24 66 29 53 29C40 29 31.5 24 31.5 17Z" fill="url(#g27)"/><path d="M31.6 14C33.5 22.5 42 27 53 27C64 27 72.5 22.5 74.4 14L75 18C73.5 26 64 30.5 53 30.5C42 30.5 32.5 26 31 18Z" fill="#fdfdfd"/><path d="M47.5 27.5L53 25.5L58.5 27.5L61 33H45Z" fill="#f6f6f6" stroke="#d4d4d4" stroke-width="0.5"/><circle cx="53" cy="28" r="1.6" fill="#dcdcdc"/></svg>
<div style="left:460px;top:121px;width:24px;height:24px;background:#fcfcfc;border:1px solid #c2c2c2;border-radius:4px;box-sizing:border-box"></div>
<svg style="left:464.5px;top:125px;" width="15" height="16" viewBox="0 0 15 16"><defs><linearGradient id="g28" x1="0" y1="0" x2="1" y2="1"><stop offset="0" stop-color="#3f93dc"/><stop offset="1" stop-color="#1566b8"/></linearGradient></defs><rect x="1.2" y="2" width="12.2" height="11.6" fill="url(#g28)" stroke="#e2e8f0" stroke-width="0.9"/><text x="7.4" y="12" font-family="Liberation Serif,serif" font-style="italic" font-weight="bold" font-size="11.5" fill="#fff" text-anchor="middle">i</text></svg>
<div style="left:490px;top:121px;width:24px;height:24px;background:#fcfcfc;border:1px solid #c2c2c2;border-radius:4px;box-sizing:border-box"></div>
<svg style="left:493px;top:124px;" width="18" height="18" viewBox="0 0 18 18"><defs><linearGradient id="g29" x1="0" y1="0" x2="0" y2="1"><stop offset="0" stop-color="#f9d560"/><stop offset="1" stop-color="#eda41a"/></linearGradient></defs><path d="M3.5 5.5C4.5 3 7 1.6 9 2.2C11.5 1.4 14.5 3 15 5.5Z" fill="#9aa4ac"/><path d="M5 4.6C6 3 7.6 2.8 8.6 3.6L8 5.5Z" fill="#4a86d0"/><path d="M9.6 3.2C11 2.6 12.6 3.2 13.4 4.6L10 5.2Z" fill="#dfe4e8"/><circle cx="8.8" cy="3.2" r="0.9" fill="#6a5a30"/><path d="M1.8 6Q1.8 4.6 3.2 4.8Q9 6.2 14.8 4.8Q16.2 4.6 16.2 6L15.6 14.6Q15.4 16 14 16H4Q2.6 16 2.4 14.6Z" fill="url(#g29)"/><path d="M3 8.4H15M3 10.4H15M3.2 12.4H14.8" stroke="#f4c23c" stroke-width="0.6" stroke-dasharray="1.2 1"/></svg>
<div class="t" style="left:588px;top:123px;font-size:14px;line-height:20px;color:#000;font-weight:bold">洗澡视频<span style="letter-spacing:0.7px">.mp4</span></div>
<div class="t" style="left:729px;top:122px;font-size:14px;line-height:20px;color:#000;font-weight:bold"><span style="letter-spacing:1.2px">-&gt;</span> <span style="letter-spacing:1.7px;margin-left:1px">MP4</span></div>
<div style="left:728px;top:148px;width:260px;height:25px;background:#fdfdfd;border:1px solid #bdbdbd;border-radius:3px;box-sizing:border-box"></div>
<div class="t c" style="left:758px;top:153.5px;width:200px;font-size:12px;line-height:16px;color:#000;">等待中</div>
<div style="left:0px;top:674px;width:996px;height:24px;background:#808080"></div>
<div style="left:0px;top:698px;width:698px;height:1px;background:#9a9a9a"></div>
<svg style="left:11px;top:678px;" width="17" height="15" viewBox="0 0 17 15"><path d="M1.5 2Q1.5 1 2.5 1H6.5L7.5 2.2H15.5V13.8H1.5Z" fill="#f6ecc8" stroke="#e8e4d8" stroke-width="0.8"/><path d="M2 4.2H15V13.4H2Z" fill="#f2d27c"/><path d="M2 3H15V4.6H2Z" fill="#f8e4a8"/><path d="M5.5 8.5C5.5 6.8 6.8 6.2 8.5 6.2L12 6C12.8 6.8 12.8 9.4 12.4 10.6C12 11.8 10.5 12 8.6 12C6.6 12 5.5 11 5.5 8.5Z" fill="#eef2f8"/><ellipse cx="7.6" cy="9" rx="1.1" ry="1.9" fill="#0e2a50"/><path d="M6.3 7C6 8.5 6 9.5 6.3 11" stroke="#5a9ae0" stroke-width="0.8" fill="none"/><path d="M9.3 6.4L11.6 6.2L11.9 7.3L9.6 7.5Z" fill="#3a3a3a"/><path d="M10.5 9.5H12V10.5H10.5Z" fill="#5a8ac8"/></svg>
<div class="t" style="left:32px;top:678px;font-size:11px;line-height:16px;color:#fff;">E:\</div>
<div style="left:134px;top:681px;width:11px;height:11px;background:#fff"><svg style="left:0;top:0" width="11" height="11" viewBox="0 0 11 11"><path d="M2 5.6L4.3 8L9 2.8" stroke="#555" stroke-width="1.1" fill="none"/></svg></div>
<div class="t" style="left:150px;top:678px;font-size:11px;line-height:16px;color:#000;">使用多线程</div>
<div class="t" style="left:697px;top:680px;font-size:11px;line-height:16px;color:#000;">耗时 : 00:00:00</div>
<div style="left:777px;top:682px;width:11px;height:11px;background:#fff"></div>
<div class="t" style="left:793px;top:680px;font-size:11px;line-height:16px;color:#000;">转换完成后 : 关闭电脑</div>
<div style="left:910px;top:682px;width:11px;height:11px;background:#fff"><svg style="left:0;top:0" width="11" height="11" viewBox="0 0 11 11"><path d="M2 5.6L4.3 8L9 2.8" stroke="#555" stroke-width="1.1" fill="none"/></svg></div>
<div class="t" style="left:926px;top:680px;font-size:11px;line-height:16px;color:#000;">完成通知</div>
<svg style="left:977px;top:682px;" width="12" height="12" viewBox="0 0 12 12"><rect x="3" y="9" width="2" height="2" fill="#c8c8c8"/><rect x="6" y="6" width="2" height="2" fill="#c8c8c8"/><rect x="6" y="9" width="2" height="2" fill="#c8c8c8"/><rect x="9" y="3" width="2" height="2" fill="#c8c8c8"/><rect x="9" y="6" width="2" height="2" fill="#c8c8c8"/><rect x="9" y="9" width="2" height="2" fill="#c8c8c8"/></svg>
<div style="left:0px;top:0px;width:997px;height:1px;background:#e6e6e6"></div>
<div style="left:0px;top:0px;width:1px;height:674px;background:#e0e0e0"></div>
<div style="left:996px;top:0px;width:1px;height:700px;background:#2c7392"></div>
<div style="left:0px;top:699px;width:698px;height:1px;background:linear-gradient(90deg,#c9c9c9,#d6d6d6 80%,#fff)"></div>
<div style="left:698px;top:699px;width:299px;height:1px;background:#2c7392"></div>
<div style="left:698px;top:698px;width:299px;height:1px;background:#5f7f8c"></div>
</div>
<div id="dlg">
<div style="left:0px;top:0px;width:526px;height:24px;background:#f0f0f0"></div>
<svg style="left:2px;top:2px;" width="23" height="20" viewBox="0 0 23 20"><defs><linearGradient id="g30" x1="0" y1="0" x2="0" y2="1"><stop offset="0" stop-color="#f6f6f6"/><stop offset="1" stop-color="#d0d0d0"/></linearGradient></defs><path d="M2 11Q2 5 6 3.6L15 2.4Q20.5 3 21.6 8L22.4 14Q22.6 18 18.5 18.6H6Q2.4 18.4 2 14.5Z" fill="url(#g30)"/><path d="M4.6 4.4L10.4 3.4L10 14.2L4.4 13.2Q3.6 9 4.6 4.4Z" fill="#9cc6ee"/><path d="M6.2 6.2Q9 5.4 10 7.2V11.6Q8.6 12.6 6.4 11.8Q5.2 9 6.2 6.2Z" fill="#0c1a4c"/><path d="M6.6 13L8.8 13.4V16.2L6.4 15.6Z" fill="#7fb0e6"/><circle cx="13.2" cy="9.2" r="4" fill="#ffffff"/><path d="M10.8 2.2Q13 0.8 15.2 2.4Q17.4 1.2 19.4 2.8Q19.8 4.4 18.2 4.8Q15.6 4 14.6 5.6Q12.4 5.8 10.8 4.4Z" fill="#3c3c3c"/><path d="M15.8 5.6L21 4.2L21.4 12.4L16.2 13.2Z" fill="#e8f0fa"/><path d="M16 5.5L21 4.2L21.1 6L16.1 7.2Z" fill="#6a9ad6"/><path d="M18.6 6.6H20V9H18.6Z" fill="#3a3a3a"/><path d="M13.6 9.2L16.4 10.4L15.4 11.8L13.2 10.6Z" fill="#555"/><path d="M16.4 12L20 11.4V12.6L16.4 13.2Z" fill="#5a90d4"/><rect x="5.6" y="15.2" width="4.6" height="1.5" fill="#9a9a9a"/><circle cx="19.4" cy="15.2" r="0.7" fill="#7ae060"/></svg>
<div class="t" style="left:38px;top:5px;font-size:12px;line-height:16px;color:#000;">视频设置</div>
<div style="left:461px;top:18px;width:10px;height:1px;background:#444"></div>
<div style="left:484px;top:7px;width:12px;height:10px;border:1px solid #333;box-sizing:border-box;border-width:1.3px"></div>
<svg style="left:507px;top:5px;" width="14" height="14" viewBox="0 0 14 14"><path d="M1.5 1.5L12.5 12.5M12.5 1.5L1.5 12.5" stroke="#333" stroke-width="1.3" fill="none"/></svg>
<svg style="left:13px;top:32px;" width="29" height="29" viewBox="0 0 29 29"><path d="M5.6 1.6Q5.8 0.8 6.6 0.8H22.4Q23.2 0.8 23.4 1.6L25.6 17.5H3.4Z" fill="#fff" stroke="#5ab2ea" stroke-width="1.5"/><rect x="8.2" y="3.6" width="12.8" height="2" fill="#f27272"/><rect x="7.8" y="7.2" width="13.4" height="2" fill="#f8c648"/><rect x="7.6" y="10.8" width="13.8" height="2" fill="#5ab2ea"/><rect x="7.4" y="14.4" width="14.2" height="2" fill="#46c8a0"/><path d="M1 17.6H28L25.4 26.6Q25.1 27.6 24 27.6H5Q3.9 27.6 3.6 26.6Z" fill="#5ab2ea"/><rect x="11" y="20.6" width="7" height="1.8" rx="0.9" fill="#e0f2fc"/></svg>
<div style="left:49px;top:32px;width:240px;height:28px;background:linear-gradient(#fdfdfd,#f1f1f1);border:1px solid #b5b5b5;border-radius:3px;box-sizing:border-box"></div>
<svg style="left:56px;top:39px;" width="15" height="14" viewBox="0 0 15 14"><rect x="0.7" y="0.7" width="13.6" height="12.6" rx="1" fill="#fff" stroke="#e88a3a" stroke-width="1.2"/><path d="M3.5 1V13M11.5 1V13" stroke="#e88a3a" stroke-width="0.9"/><path d="M1 4H3.5M1 7H3.5M1 10H3.5M11.5 4H14M11.5 7H14M11.5 10H14" stroke="#e88a3a" stroke-width="0.8"/><path d="M6 4.8L9.6 7L6 9.2Z" fill="#5ab4ea"/></svg>
<div class="t" style="left:75px;top:37.5px;font-size:13px;line-height:18px;color:#000;">最优化的质量和大小</div>
<svg style="left:274px;top:44px;" width="8" height="5" viewBox="0 0 8 5"><path d="M0.2 0.3H7.8L4 4.4Z" fill="#5e5e5e"/></svg>
<div style="left:375px;top:32px;width:140px;height:28px;background:linear-gradient(#fefefe,#f1f1f1);border:1px solid #b5b5b5;border-radius:3px;box-sizing:border-box"></div>
<svg style="left:416px;top:37.5px;" width="17" height="17" viewBox="0 0 17 17"><path d="M1.5 2.5Q1.5 1.5 2.5 1.5H12.5L15.5 4.5V14.5Q15.5 15.5 14.5 15.5H2.5Q1.5 15.5 1.5 14.5Z" fill="#fff" stroke="#3aa0e0" stroke-width="1.1"/><path d="M4.5 1.5V6.5H11.5V1.5" fill="#d4ecfa" stroke="#3aa0e0" stroke-width="1"/><rect x="8.5" y="2.5" width="1.8" height="3" fill="#3aa0e0"/><path d="M3.5 15.5V10H13.5V15.5" fill="none" stroke="#3aa0e0" stroke-width="1"/></svg>
<div class="t" style="left:435px;top:38.5px;font-size:12px;line-height:16px;color:#000;">另存为</div>
<div style="left:11px;top:68px;width:69px;height:27px;background:#fff;border:1px solid #c6c6c6;border-bottom:none;border-radius:3px 3px 0 0;box-sizing:border-box;z-index:2"></div>
<svg style="left:23px;top:73px;z-index:3" width="16" height="16" viewBox="0 0 16 16"><rect x="0.5" y="0.5" width="15" height="15" rx="2" fill="#4a9af0"/><circle cx="8" cy="8" r="4.6" fill="none" stroke="#fff" stroke-width="1.2"/><path d="M6.8 5.8L10.2 8L6.8 10.2Z" fill="#fff"/></svg>
<div class="t" style="left:42px;top:75px;font-size:12px;line-height:16px;color:#000;z-index:3">视频</div>
<div style="left:79px;top:70px;width:69px;height:25px;background:#ebebeb;border:1px solid #c6c6c6;border-bottom:none;border-radius:3px 3px 0 0;box-sizing:border-box"></div>
<svg style="left:91px;top:74px;" width="16" height="16" viewBox="0 0 16 16"><rect x="0.5" y="0.5" width="15" height="15" rx="2" fill="#f8417e"/><path d="M6 4.5L12 3.5V10.5" fill="none" stroke="#fff" stroke-width="1.3"/><path d="M6 4.5V11.5" stroke="#fff" stroke-width="1.3"/><ellipse cx="4.8" cy="11.6" rx="1.8" ry="1.4" fill="#fff"/><ellipse cx="10.8" cy="10.6" rx="1.8" ry="1.4" fill="#fff"/></svg>
<div class="t" style="left:111px;top:75px;font-size:12px;line-height:16px;color:#000;">音频</div>
<div style="left:147px;top:70px;width:69px;height:25px;background:#ebebeb;border:1px solid #c6c6c6;border-bottom:none;border-radius:3px 3px 0 0;box-sizing:border-box"></div>
<svg style="left:159px;top:74px;" width="16" height="16" viewBox="0 0 16 16"><rect x="1" y="1" width="14" height="14" rx="2.5" fill="#eaf5fe" stroke="#3a9af0" stroke-width="1.2"/><path d="M4 5.5H12" stroke="#3a9af0" stroke-width="1.3"/><path d="M4 8.2H12" stroke="#4ac890" stroke-width="1.3"/><path d="M4 10.9H12" stroke="#3a9af0" stroke-width="1.3"/></svg>
<div class="t" style="left:179px;top:75px;font-size:12px;line-height:16px;color:#000;">字幕</div>
<div style="left:215px;top:70px;width:69px;height:25px;background:#ebebeb;border:1px solid #c6c6c6;border-bottom:none;border-radius:3px 3px 0 0;box-sizing:border-box"></div>
<svg style="left:227px;top:74px;" width="16" height="16" viewBox="0 0 16 16"><rect x="1" y="1" width="14" height="14" rx="2" fill="#e6f0fb" stroke="#7fb0e0" stroke-width="1"/><path d="M3.5 4.5H12.5M3.5 8H12.5M3.5 11.5H12.5" stroke="#5f9fd8" stroke-width="0.9"/><circle cx="9.5" cy="4.5" r="1.4" fill="#fff" stroke="#5f9fd8" stroke-width="0.8"/><circle cx="6" cy="8" r="1.4" fill="#fff" stroke="#5f9fd8" stroke-width="0.8"/><circle cx="10" cy="11.5" r="1.4" fill="#fff" stroke="#5f9fd8" stroke-width="0.8"/></svg>
<div class="t" style="left:247px;top:75px;font-size:12px;line-height:16px;color:#000;">其他</div>
<div style="left:283px;top:70px;width:68px;height:25px;background:#ebebeb;border:1px solid #c6c6c6;border-bottom:none;border-radius:3px 3px 0 0;box-sizing:border-box"></div>
<svg style="left:295px;top:74px;" width="16" height="16" viewBox="0 0 16 16"><rect x="0" y="0" width="16" height="16" fill="#fff"/><polygon points="15.20,8.00 13.90,9.92 13.82,12.23 11.64,13.02 10.22,14.85 8.00,14.20 5.78,14.85 4.36,13.02 2.18,12.23 2.10,9.92 0.80,8.00 2.10,6.08 2.18,3.77 4.36,2.98 5.78,1.15 8.00,1.80 10.22,1.15 11.64,2.98 13.82,3.77 13.90,6.08" fill="#f47a1a"/><text x="8" y="9.6" font-family="Liberation Sans,sans-serif" font-weight="bold" font-size="4.2" fill="#fff" text-anchor="middle">NEW</text></svg>
<div class="t" style="left:315px;top:75px;font-size:12px;line-height:16px;color:#000;">水印</div>
<div style="left:11px;top:94px;width:504px;height:393px;background:#fff;border:1px solid #c6c6c6;box-sizing:border-box"></div>
<div style="left:13px;top:96px;width:500px;height:390px;background:#fff;border:1px solid #b8b8b8;box-sizing:border-box"></div>
<div id="grid">
<svg style="left:23px;top:2px;" width="17" height="17" viewBox="0 0 17 17"><rect x="1" y="4.5" width="15" height="8.5" rx="1" fill="#fff" stroke="#1f96e6" stroke-width="1.4"/><path d="M4 5V8M6.3 5V7M8.6 5V8M10.9 5V7M13.2 5V8" stroke="#1f96e6" stroke-width="0.9"/></svg>
<div class="t" style="left:47px;top:4px;font-size:12px;line-height:16px;color:#000;">大小限制</div>
<div class="t" style="left:245px;top:4px;font-size:12px;line-height:16px;color:#000;">关闭</div>
<div style="left:0px;top:21px;width:485px;height:1px;background:#d4d4d4"></div>
<svg style="left:23px;top:24px;" width="17" height="17" viewBox="0 0 17 17"><path d="M4.5 0.6V3.4M4.5 13.6V16.4M0.6 4.5H3.4M13.6 4.5H16.4" stroke="#84a4d0" stroke-width="1"/><path d="M6.5 0.6V3.4M6.5 13.6V16.4M0.6 6.5H3.4M13.6 6.5H16.4" stroke="#84a4d0" stroke-width="1"/><path d="M8.5 0.6V3.4M8.5 13.6V16.4M0.6 8.5H3.4M13.6 8.5H16.4" stroke="#84a4d0" stroke-width="1"/><path d="M10.5 0.6V3.4M10.5 13.6V16.4M0.6 10.5H3.4M13.6 10.5H16.4" stroke="#84a4d0" stroke-width="1"/><path d="M12.5 0.6V3.4M12.5 13.6V16.4M0.6 12.5H3.4M13.6 12.5H16.4" stroke="#84a4d0" stroke-width="1"/><rect x="3.4" y="3.4" width="10.2" height="10.2" rx="1" fill="#a4ccf6" stroke="#5c98e0" stroke-width="1.1"/><rect x="7" y="7" width="3" height="3" fill="#fff" stroke="#6aa2e4" stroke-width="0.8"/></svg>
<div class="t" style="left:47px;top:26px;font-size:12px;line-height:16px;color:#000;">视频编码</div>
<div class="t" style="left:245px;top:26px;font-size:12px;line-height:16px;color:#000;letter-spacing:0.15px">AVC(H264)</div>
<div style="left:0px;top:43px;width:485px;height:1px;background:#d4d4d4"></div>
<svg style="left:23px;top:46px;" width="17" height="17" viewBox="0 0 17 17"><rect x="1.2" y="2" width="14.6" height="10.5" rx="1.5" fill="#fff" stroke="#1f96e6" stroke-width="1.4"/><path d="M3.8 6.5V4.6H5.8M13.2 8V9.9H11.2" fill="none" stroke="#1f96e6" stroke-width="1.1"/><path d="M8.5 12.5V14.6M5.5 15H11.5" stroke="#1f96e6" stroke-width="1.4"/></svg>
<div class="t" style="left:47px;top:48px;font-size:12px;line-height:16px;color:#000;">屏幕大小</div>
<div class="t" style="left:246px;top:48px;font-size:12px;line-height:16px;color:#000;letter-spacing:0.75px">&lt;1080p</div>
<div style="left:0px;top:65px;width:485px;height:1px;background:#d4d4d4"></div>
<svg style="left:23px;top:68px;" width="17" height="17" viewBox="0 0 17 17"><path d="M1 5.5Q4.5 2.1 8.5 4.5T16 3.9" fill="none" stroke="#1f96e6" stroke-width="1.3"/><path d="M1 9.5Q4.5 6.1 8.5 8.5T16 7.9" fill="none" stroke="#1f96e6" stroke-width="1.3"/><path d="M1 13.5Q4.5 10.1 8.5 12.5T16 11.9" fill="none" stroke="#1f96e6" stroke-width="1.3"/></svg>
<div class="t" style="left:47px;top:69.5px;font-size:12px;line-height:16px;color:#000;">码率</div>
<div class="t" style="left:245px;top:69.5px;font-size:12px;line-height:16px;color:#000;">默认</div>
<div style="left:0px;top:86px;width:485px;height:1px;background:#d4d4d4"></div>
<svg style="left:23px;top:90px;" width="17" height="17" viewBox="0 0 17 17"><ellipse cx="7.7" cy="7.9" rx="8.3" ry="4.2" fill="none" stroke="#1f96e6" stroke-width="1.05" transform="rotate(30 7.7 7.9)"/><ellipse cx="7.7" cy="7.9" rx="8.3" ry="4.2" fill="none" stroke="#1f96e6" stroke-width="1.05" transform="rotate(90 7.7 7.9)"/><ellipse cx="7.7" cy="7.9" rx="8.3" ry="4.2" fill="none" stroke="#1f96e6" stroke-width="1.05" transform="rotate(150 7.7 7.9)"/><circle cx="7.7" cy="7.9" r="3" fill="#fff" stroke="#1f96e6" stroke-width="1"/><circle cx="7.7" cy="7.9" r="1.1" fill="#fff" stroke="#1f96e6" stroke-width="0.9"/></svg>
<div class="t" style="left:47px;top:91px;font-size:12px;line-height:16px;color:#000;letter-spacing:-0.4px">CRF</div>
<div class="t" style="left:245px;top:91px;font-size:12px;line-height:16px;color:#000;">关闭</div>
<div style="left:0px;top:108px;width:485px;height:1px;background:#d4d4d4"></div>
<svg style="left:23px;top:112px;" width="17" height="17" viewBox="0 0 17 17"><path d="M0.4 0.2V15.8" stroke="#a8d2f6" stroke-width="0.8"/><rect x="0.8" y="1.8" width="15.6" height="14" rx="0.8" fill="#cfe6fb" stroke="#a8d2f6" stroke-width="1"/><rect x="2.6" y="4.4" width="12" height="9" rx="1.2" fill="#fff" stroke="#6ab4ee" stroke-width="0.8"/><text x="8.6" y="10.9" font-family="Liberation Sans,sans-serif" font-weight="bold" font-size="5.4" fill="#3a9ae8" text-anchor="middle">GPU</text></svg>
<div class="t" style="left:47px;top:113px;font-size:12px;line-height:16px;color:#000;letter-spacing:-0.4px">GPU</div>
<div class="t" style="left:245px;top:113px;font-size:12px;line-height:16px;color:#000;">自动检测</div>
<div style="left:0px;top:130px;width:485px;height:1px;background:#d4d4d4"></div>
<svg style="left:23px;top:134px;" width="17" height="17" viewBox="0 0 17 17"><path d="M1 11.6A7.6 7.6 0 0 1 16 11.6" fill="none" stroke="#c4def6" stroke-width="1"/><path d="M7.2 10.8L10.4 4.2L9.8 11.2Z" fill="#4a78c4"/><text x="8.4" y="14.8" font-family="Liberation Sans,sans-serif" font-weight="bold" font-size="3.2" fill="#6aa4e4" text-anchor="middle">FPS</text></svg>
<div class="t" style="left:47px;top:135px;font-size:12px;line-height:16px;color:#000;">每秒帧数</div>
<div class="t" style="left:245px;top:135px;font-size:12px;line-height:16px;color:#000;">默认</div>
<div style="left:0px;top:152px;width:485px;height:1px;background:#d4d4d4"></div>
<svg style="left:23px;top:156px;" width="17" height="17" viewBox="0 0 17 17"><rect x="1.2" y="2.2" width="14.6" height="12.6" rx="0.8" fill="#fff" stroke="#1f96e6" stroke-width="1.3"/><rect x="1.8" y="2.8" width="13.4" height="2.6" fill="#bfe0f8"/><rect x="1.8" y="11.6" width="13.4" height="2.6" fill="#bfe0f8"/><path d="M8.5 6.2L10 7.8H7ZM8.5 10.8L10 9.2H7Z" fill="#1f96e6"/></svg>
<div class="t" style="left:47px;top:157px;font-size:12px;line-height:16px;color:#000;">宽高比</div>
<div class="t" style="left:245px;top:157px;font-size:12px;line-height:16px;color:#000;">自动</div>
<div style="left:0px;top:174px;width:485px;height:1px;background:#d4d4d4"></div>
<svg style="left:23px;top:178px;" width="17" height="17" viewBox="0 0 17 17"><polygon points="8.40,-0.70 11.79,2.38 15.97,4.00 15.19,8.70 15.97,13.40 11.79,15.02 8.40,18.10 5.01,15.02 0.83,13.40 1.61,8.70 0.83,4.00 5.01,2.38" fill="#1e90e6" stroke="#1e90e6" stroke-width="1.2" stroke-linejoin="round"/><text x="8.4" y="12.4" font-family="Liberation Sans,sans-serif" font-weight="bold" font-size="10.5" fill="#fff" text-anchor="middle">2</text></svg>
<div class="t" style="left:47px;top:179px;font-size:12px;line-height:16px;color:#000;">二次编码</div>
<div class="t" style="left:245px;top:179px;font-size:12px;line-height:16px;color:#000;">否</div>
<div style="left:0px;top:196px;width:485px;height:1px;background:#d4d4d4"></div>
<svg style="left:23px;top:200px;" width="17" height="17" viewBox="0 0 17 17"><rect x="0.8" y="0.3" width="1" height="16.4" fill="#7f9fcc"/><rect x="15.2" y="0.3" width="1" height="16.4" fill="#7f9fcc"/><rect x="6.2" y="0.8" width="4.6" height="15.4" fill="#4794d6"/></svg>
<div class="t" style="left:47px;top:201px;font-size:12px;line-height:16px;color:#000;">关键帧间隔</div>
<div class="t" style="left:245px;top:201px;font-size:12px;line-height:16px;color:#000;">默认</div>
<div style="left:0px;top:218px;width:485px;height:1px;background:#d4d4d4"></div>
<svg style="left:23px;top:222px;" width="17" height="17" viewBox="0 0 17 17"><rect x="0.6" y="1" width="7.8" height="1.9" fill="#2a92ea"/><rect x="9" y="3.9" width="4.4" height="1.9" fill="#2a92ea"/><rect x="2.4" y="6.2" width="6" height="1.8" fill="#7cbcf6"/><rect x="9" y="8.4" width="5.8" height="1.9" fill="#2a92ea"/><rect x="4.2" y="11" width="4.2" height="1.8" fill="#7cbcf6"/><rect x="8.4" y="13.6" width="8" height="2" fill="#2a92ea"/></svg>
<div class="t" style="left:47px;top:223px;font-size:12px;line-height:16px;color:#000;">反交错</div>
<div class="t" style="left:245px;top:223px;font-size:12px;line-height:16px;color:#000;">否</div>
<div style="left:0px;top:240px;width:485px;height:1px;background:#d4d4d4"></div>
<svg style="left:23px;top:244px;" width="17" height="17" viewBox="0 0 17 17"><path d="M8 1.3C3.5 1.3 1.2 5 1.2 8.6C1.2 11 2 12.8 3.4 14.4" fill="none" stroke="#1f96e6" stroke-width="1.3"/><path d="M1 11.6V15.4H5.2" fill="none" stroke="#1f96e6" stroke-width="1.3"/><path d="M9 16C13.5 16 15.8 12.3 15.8 8.7C15.8 6.3 15 4.5 13.6 2.9" fill="none" stroke="#1f96e6" stroke-width="1.3"/><path d="M16 5.7V1.9H11.8" fill="none" stroke="#1f96e6" stroke-width="1.3"/><path d="M8.5 6L11 8.6L8.5 11.2L6 8.6Z" fill="#fff" stroke="#1f96e6" stroke-width="1.2"/></svg>
<div class="t" style="left:47px;top:245px;font-size:12px;line-height:16px;color:#000;">旋转</div>
<div class="t" style="left:245px;top:245px;font-size:12px;line-height:16px;color:#000;">否</div>
<div style="left:0px;top:262px;width:485px;height:1px;background:#d4d4d4"></div>
<svg style="left:23px;top:266px;" width="17" height="17" viewBox="0 0 17 17"><path d="M7 3.5V14H2.5Z" fill="#c4e0f8"/><path d="M10 3.5V14H14.5Z" fill="#2a8fe0"/><path d="M8.5 1.5V16" stroke="#bcdcf6" stroke-width="0.9"/></svg>
<div class="t" style="left:47px;top:267px;font-size:12px;line-height:16px;color:#000;">左右颠倒</div>
<div class="t" style="left:245px;top:267px;font-size:12px;line-height:16px;color:#000;">否</div>
<div style="left:0px;top:284px;width:485px;height:1px;background:#d4d4d4"></div>
<svg style="left:23px;top:288px;" width="17" height="17" viewBox="0 0 17 17"><path d="M3 7V2.5L14 7Z" fill="#c4e0f8"/><path d="M3 10V14.5L14 10Z" fill="#2a8fe0"/><path d="M1 8.5H16" stroke="#bcdcf6" stroke-width="0.9"/></svg>
<div class="t" style="left:47px;top:289px;font-size:12px;line-height:16px;color:#000;">上下颠倒</div>
<div class="t" style="left:245px;top:289px;font-size:12px;line-height:16px;color:#000;">否</div>
<div style="left:0px;top:306px;width:485px;height:1px;background:#d4d4d4"></div>
<svg style="left:23px;top:310px;" width="17" height="17" viewBox="0 0 17 17"><rect x="6.6" y="2.3" width="4.6" height="12.6" fill="#fff" stroke="#1f96e6" stroke-width="1.1"/><circle cx="3.6" cy="3.2" r="0.9" fill="#1f96e6"/><circle cx="2.2" cy="5.6" r="0.8" fill="#1f96e6"/><circle cx="4.4" cy="6.6" r="0.8" fill="#1f96e6"/><circle cx="4.6" cy="9.6" r="1.1" fill="#1f96e6"/><circle cx="2.4" cy="12.6" r="0.8" fill="#1f96e6"/><circle cx="14" cy="5.4" r="0.75" fill="#1f96e6"/><circle cx="14" cy="8.6" r="0.75" fill="#1f96e6"/><circle cx="14" cy="11.8" r="0.75" fill="#1f96e6"/></svg>
<div class="t" style="left:47px;top:311px;font-size:12px;line-height:16px;color:#000;">过滤器</div>
<svg style="left:245px;top:310px;" width="17" height="17" viewBox="0 0 17 17"><circle cx="8.9" cy="7.9" r="7.5" fill="#fff" stroke="#1f96e6" stroke-width="1.1"/><text x="8.9" y="10.8" font-family="Liberation Sans,sans-serif" font-size="9.4" fill="#1f96e6" text-anchor="middle" letter-spacing="0.2">off</text></svg>
<div class="t" style="left:269px;top:311px;font-size:12px;line-height:16px;color:#000;">关闭</div>
<div style="left:0px;top:328px;width:485px;height:1px;background:#d4d4d4"></div>
<svg style="left:23px;top:331px;" width="17" height="17" viewBox="0 0 17 17"><polygon points="13.96,11.95 8.50,15.10 3.04,11.95 3.04,5.65 8.50,2.50 13.96,5.65" fill="#1f95e6" stroke="#1f95e6" stroke-width="1" stroke-linejoin="round"/></svg>
<div class="t" style="left:47px;top:333px;font-size:12px;line-height:16px;color:#000;">淡入效果</div>
<div class="t" style="left:245px;top:333px;font-size:12px;line-height:16px;color:#000;">关闭</div>
<div style="left:0px;top:349px;width:485px;height:1px;background:#d4d4d4"></div>
<svg style="left:23px;top:352px;" width="17" height="17" viewBox="0 0 17 17"><polygon points="14.30,8.50 11.40,13.52 5.60,13.52 2.70,8.50 5.60,3.48 11.40,3.48" fill="#7cc0ee" stroke="#3aa0e8" stroke-width="0.9" stroke-linejoin="round"/></svg>
<div class="t" style="left:47px;top:354px;font-size:12px;line-height:16px;color:#000;">淡出效果</div>
<div class="t" style="left:245px;top:354px;font-size:12px;line-height:16px;color:#000;">关闭</div>
<div style="left:0px;top:370px;width:485px;height:1px;background:#d4d4d4"></div>
<svg style="left:23px;top:374px;" width="17" height="17" viewBox="0 0 17 17"><path d="M0.6 1.2L2.6 15.5M16.4 1.2L14.4 15.5" stroke="#f6b6b2" stroke-width="1.8"/><rect x="4.1" y="1.5" width="8.8" height="15" rx="0.8" fill="#fff" stroke="#ee6a6a" stroke-width="1.8"/></svg>
<div class="t" style="left:47px;top:376px;font-size:12px;line-height:16px;color:#000;">防抖 (白金功能)</div>
<div class="t" style="left:245px;top:376px;font-size:12px;line-height:16px;color:#000;">关闭</div>
<div style="left:241px;top:0px;width:1px;height:390px;background:#d4d4d4"></div>
</div>
<div style="left:498px;top:97px;width:1px;height:388px;background:#c9c9c9"></div>
<div style="left:499px;top:97px;width:13px;height:388px;background:#fcfcfc"></div>
<div style="left:499px;top:110px;width:13px;height:1px;background:#d0d0d0"></div>
<svg style="left:501px;top:101px;" width="9" height="5" viewBox="0 0 9 5"><path d="M0.3 4.6H8.7L4.5 0.4Z" fill="#505050"/></svg>
<div style="left:499px;top:418px;width:13px;height:55px;background:#e8e8e8"></div>
<svg style="left:501px;top:476px;" width="9" height="5" viewBox="0 0 9 5"><path d="M0.3 0.2H8.7L4.5 4.4Z" fill="#505050"/></svg>
<div style="left:11px;top:494px;width:120px;height:28px;background:linear-gradient(#fefefe,#f1f1f1);border:1px solid #b5b5b5;border-radius:3px;box-sizing:border-box"></div>
<svg style="left:45px;top:496px;" width="24" height="24" viewBox="0 0 24 24"><path d="M0.4 11L10.6 1.4V6.6C17.5 6.8 23.2 11.5 24.2 23.4C21.5 18 17.5 15.6 10.6 15.6V20.8Z" fill="#33b898"/></svg>
<div class="t" style="left:71px;top:501.5px;font-size:12px;line-height:16px;color:#000;">取消</div>
<div style="left:203px;top:494px;width:120px;height:28px;background:linear-gradient(#fefefe,#f1f1f1);border:1px solid #b5b5b5;border-radius:3px;box-sizing:border-box"></div>
<svg style="left:237px;top:496px;" width="24" height="24" viewBox="0 0 24 24"><path d="M5.5 2.7H14.6L19.3 7.4V21.3H5.5Z" fill="#fff" stroke="#62b0ee" stroke-width="1.2"/><path d="M14.6 2.7V7.4H19.3" fill="#d8ecfc" stroke="#62b0ee" stroke-width="1"/><rect x="0.8" y="10.6" width="23.2" height="7.4" fill="#58aaf0"/><text x="12.4" y="16" font-family="Liberation Sans,sans-serif" font-weight="bold" font-size="4.3" fill="#fff" text-anchor="middle" letter-spacing="0.25">DEFAULT</text></svg>
<div class="t" style="left:263px;top:501.5px;font-size:12px;line-height:16px;color:#000;">默认</div>
<div style="left:395px;top:494px;width:120px;height:28px;background:linear-gradient(#fefefe,#f1f1f1);border:1px solid #b5b5b5;border-radius:3px;box-sizing:border-box"></div>
<svg style="left:429px;top:496px;" width="24" height="24" viewBox="0 0 24 24"><circle cx="12" cy="12" r="9.6" fill="#fff" stroke="#2a9ae6" stroke-width="1.5"/><path d="M7.2 12.2L10.8 15.6L17 8.6" fill="none" stroke="#2a9ae6" stroke-width="1.7"/></svg>
<div class="t" style="left:455px;top:501.5px;font-size:12px;line-height:16px;color:#000;">确定</div>
<svg style="left:514px;top:520px;" width="12" height="12" viewBox="0 0 12 12"><rect x="10.15" y="1.00" width="1.2" height="1.2" fill="#c6c6c6"/><rect x="7.10" y="4.00" width="1.2" height="1.2" fill="#c6c6c6"/><rect x="10.15" y="4.00" width="1.2" height="1.2" fill="#c6c6c6"/><rect x="4.05" y="7.00" width="1.2" height="1.2" fill="#c6c6c6"/><rect x="7.10" y="7.00" width="1.2" height="1.2" fill="#c6c6c6"/><rect x="10.15" y="7.00" width="1.2" height="1.2" fill="#c6c6c6"/><rect x="1.00" y="10.00" width="1.2" height="1.2" fill="#c6c6c6"/><rect x="4.05" y="10.00" width="1.2" height="1.2" fill="#c6c6c6"/><rect x="7.10" y="10.00" width="1.2" height="1.2" fill="#c6c6c6"/><rect x="10.15" y="10.00" width="1.2" height="1.2" fill="#c6c6c6"/></svg>
</div>
</body>
</html>
